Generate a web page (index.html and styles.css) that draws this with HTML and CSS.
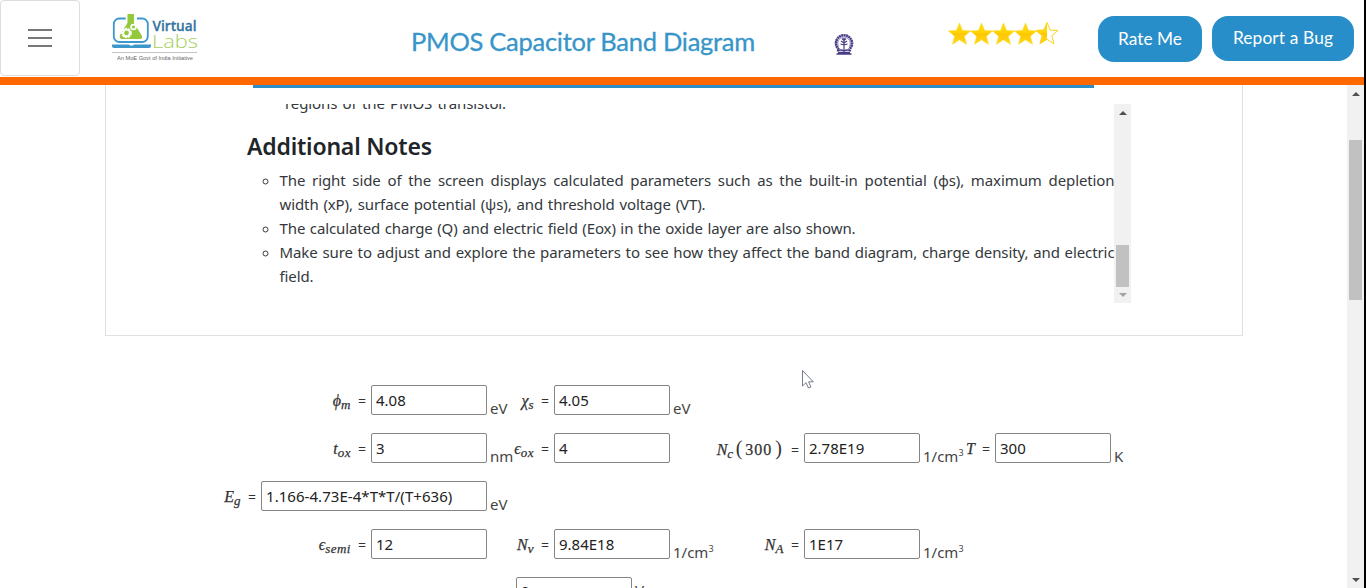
FILE: index.html
```html
<!DOCTYPE html>
<html lang="en">
<head>
<meta charset="utf-8">
<title>PMOS Capacitor Band Diagram</title>
<link rel="stylesheet" href="styles.css">
</head>
<body>
<header class="header">
  <button class="menu" aria-label="Menu"><span></span><span></span><span></span></button>
  <svg class="logo" width="90" height="52" viewBox="110 11 90 52">
    <rect x="113.800" y="18.500" width="34" height="23.500" rx="5.500" fill="none" stroke="#3c97cb" stroke-width="1.800"/>
    <path d="M125 13h12v8l6 14c1 3-1 5-4 5h-16c-3 0-5-2-4-5l7-14z" fill="#fff"/>
    <path d="M127.500 14h6.500v9l7.500 12c1.500 3 0 4-2 4h-17.500c-2 0-3-2-1.500-5l7-11z" fill="#94c83d"/>
    <circle cx="126.500" cy="33" r="4" fill="none" stroke="#fff" stroke-width="2.600" stroke-dasharray="2.200 .6"/>
    <circle cx="126.500" cy="33" r="3.200" fill="none" stroke="#fff" stroke-width="1.600"/>
    <circle cx="133.500" cy="27" r="2.400" fill="none" stroke="#fff" stroke-width="1.700"/>
    <path d="M112 44.500h17l1 1h3l1-1h17v1.500q0 2-2 2h-35q-2 0-2-2z" fill="#3c97cb"/>
    <text class="logo-virtual" x="152.500" y="31" textLength="44" lengthAdjust="spacingAndGlyphs">Virtual</text>
    <text class="logo-labs" x="152" y="48" textLength="46" lengthAdjust="spacingAndGlyphs">Labs</text>
    <path d="M112 52.500h85" stroke="#c4c4c4"/>
    <text class="logo-tag" x="117" y="59.500" textLength="76" lengthAdjust="spacingAndGlyphs">An MoE Govt of India Initiative</text>
  </svg>
  <h1 class="title">PMOS Capacitor Band Diagram</h1>
  <svg class="emblem" width="20" height="24" viewBox="0 0 20 24" fill="none" stroke="#493c87">
    <path d="M5 17.500A8 8 0 1 1 15 17.500" stroke-width="2.600" stroke-dasharray="2 .4"/>
    <path d="M5 15A6.200 6.200 0 1 1 15 15" stroke-width=".8" opacity=".6"/>
    <path d="M10 6v12M7 9l3 2 3-2M6.500 12l3.500 1 3.500-1M8 6.500l2 2 2-2" stroke-width="1.200"/>
    <path d="M3 19q4-2 7 0q3-2 7 0M2.500 22h15M4 20.500h12" stroke-width="1.400"/>
  </svg>
  <svg class="stars" width="112" height="24" viewBox="0 0 112 24">
    <defs>
      <linearGradient id="gold" x2="0" y2="1"><stop offset="0" stop-color="#ffda16"/><stop offset=".48" stop-color="#ffd400"/><stop offset=".5" stop-color="#ffc600"/><stop offset="1" stop-color="#ffd81a"/></linearGradient>
      <path id="star" d="M11 0l3 7.500 8 .5-6.200 5.200 2.200 8-7-4.400-7 4.400 2.200-8L0 8l8-.5z"/>
      <clipPath id="half"><path d="M0 0h11v24H0z"/></clipPath>
    </defs>
    <g fill="url(#gold)" stroke="#ffd81a" stroke-width=".6">
      <use href="#star" x=".5" y="1"/><use href="#star" x="22.500" y="1"/><use href="#star" x="44.500" y="1"/><use href="#star" x="66.500" y="1"/>
      <g transform="translate(88 .5)"><use href="#star" clip-path="url(#half)"/><use href="#star" fill="none" stroke="#ffd21c" stroke-width="1"/></g>
    </g>
  </svg>
  <button class="pill rate">Rate Me</button>
  <button class="pill report">Report a Bug</button>
</header>
<div class="body">
  <main class="content">
    <section class="panel">
      <div class="bar"></div>
      <div class="scrollbox">
        <div class="notes">
          <p class="cut"><span class="fit w222">regions of the PMOS transistor.</span></p>
          <h2>Additional Notes</h2>
          <ul>
            <li><span class="fit w835">The right side of the screen displays calculated parameters such as the built-in potential (ɸs), maximum depletion</span><span class="fit w426">width (xP), surface potential (ψs), and threshold voltage (VT).</span></li>
            <li><span class="fit w576">The calculated charge (Q) and electric field (Eox) in the oxide layer are also shown.</span></li>
            <li><span class="fit w835">Make sure to adjust and explore the parameters to see how they affect the band diagram, charge density, and electric</span><span class="fit">field.</span></li>
          </ul>
        </div>
        <div class="sb inner"><i class="up"></i><b></b><i class="down pale"></i></div>
      </div>
    </section>
    <form class="form">
      <div class="row">
        <label class="a"><span class="m"><i>ϕ<sub>m</sub></i><em>=</em></span><input value="4.08"></label><span class="u ua">eV</span>
        <label class="b"><span class="m"><i>χ<sub>s</sub></i><em>=</em></span><input value="4.05"></label><span class="u">eV</span>
      </div>
      <div class="row">
        <label class="a"><span class="m"><i>t<sub>ox</sub></i><em>=</em></span><input value="3"></label><span class="u ua">nm</span>
        <label class="b"><span class="m"><i>ϵ<sub>ox</sub></i><em>=</em></span><input value="4"></label><span class="u"></span>
        <label class="c"><span class="m"><i>N<sub>c</sub></i><span class="par">(</span><span class="num">300</span><span class="par">)</span><em>=</em></span><input value="2.78E19"></label><span class="u">1/cm<sup>3</sup></span>
        <label class="d"><span class="m"><i>T</i><em>=</em></span><input value="300"></label><span class="u">K</span>
      </div>
      <div class="row">
        <label class="a"><span class="m"><i>E<sub>g</sub></i><em>=</em></span><input class="wide" value="1.166-4.73E-4*T*T/(T+636)"></label><span class="u ua">eV</span>
      </div>
      <div class="row">
        <label class="a"><span class="m"><i>ϵ<sub>semi</sub></i><em>=</em></span><input value="12"></label><span class="u ua"></span>
        <label class="b"><span class="m"><i>N<sub>v</sub></i><em>=</em></span><input value="9.84E18"></label><span class="u">1/cm<sup>3</sup></span>
        <label class="c"><span class="m"><i>N<sub>A</sub></i><em>=</em></span><input value="1E17"></label><span class="u">1/cm<sup>3</sup></span>
      </div>
      <div class="row last"><input value="0"><span class="u level">V</span></div>
    </form>
  </main>
  <div class="sb page"><i class="up"></i><b></b><i class="down"></i></div>
  <div class="edge"></div>
</div>
<svg class="cursor" width="12" height="19" viewBox="0 0 12 19"><path d="M.5 .5v15.500l3.500-3.300 2.500 5.300 2.400-1-2.300-5.200h4.700z" fill="#fff" stroke="#555a70" stroke-width=".8"/></svg>
</body>
</html>
```

FILE: styles.css
```css
* { box-sizing: border-box; }
body { margin: 0; width: 1366px; height: 588px; overflow: hidden; background: #fff; color: #212529; font-family: "Noto Sans", sans-serif; font-size: 15px; display: flex; flex-direction: column; }
button, input { font-family: inherit; margin: 0; }

.header { height: 85px; flex: none; border-bottom: 8px solid #ff6800; display: flex; align-items: flex-start; margin-right: 2px; box-shadow: 2px 0 0 #000; }
.menu { width: 80px; height: 76px; background: #fff; border: 1px solid #dedede; border-radius: 4px; padding: 0; display: flex; flex-direction: column; align-items: center; justify-content: center; gap: 6px; }
.menu span { width: 24px; height: 2px; background: #777; }
.logo { margin: 11px 0 0 30px; }
.logo-virtual { font: 600 15px "Open Sans", sans-serif; fill: #31749f; stroke: #31749f; stroke-width: .3px; }
.logo-labs { font: 300 18px "Open Sans", sans-serif; fill: #a5cf5e; }
.logo-tag { font: 5.5px "Liberation Sans", sans-serif; fill: #666; }
.title { margin: 25px 0 0 211px; width: 344px; font: 400 25.5px/32px Lato, sans-serif; color: #3795c9; -webkit-text-stroke: .3px #3795c9; white-space: nowrap; letter-spacing: -.28px; }
.emblem { margin: 32px 0 0 79px; }
.stars { margin: 22px 0 0 94px; }
.pill { border: 0; border-radius: 16px; background: #288ec9; color: #fff; font: 17.3px Lato, sans-serif; padding: 0 0 2px; white-space: nowrap; }
.rate { width: 104px; height: 46px; margin: 16px 0 0 38px; }
.report { width: 142px; height: 45px; margin: 16px 0 0 10px; letter-spacing: .15px; }

.body { flex: 1; display: flex; min-height: 0; }
.content { flex: 1; overflow: hidden; }
.panel { margin-left: 105px; width: 1138px; height: 251px; border: 1px solid #e1e1e1; border-top: 0; }
.bar { margin-left: 147px; width: 841px; height: 3px; background: #2f8dc6; }
.scrollbox { margin: 16px 0 0 141px; width: 884px; height: 199px; display: flex; overflow: hidden; }
.notes { width: 868px; }
.cut { margin: -13px 0 0 38px; line-height: 24px; color: #34383c; }
h2 { margin: 17px 0 7px; font: 600 23px/29px "Noto Sans", sans-serif; letter-spacing: -.2px; white-space: nowrap; }
ul { margin: 0; padding-left: 32.5px; list-style: circle; line-height: 24px; color: #34383c; }
.fit { display: block; white-space: nowrap; text-align: justify; text-align-last: justify; letter-spacing: -.1px; }
.fit:not([class*="w"]) { text-align-last: left; }
.w222 { width: 221px; }
.w835 { width: 835px; }
.w426 { width: 426px; }
.w576 { width: 576px; }

.sb { width: 17px; flex: none; background: #f1f1f1; display: flex; flex-direction: column; align-items: center; }
.sb b { width: 13px; background: #c1c1c1; }
.up, .down { width: 0; height: 0; border: 4px solid transparent; }
.up { border-top: 0; border-bottom-color: #505050; }
.down { border-bottom: 0; border-top-color: #505050; margin-top: auto; margin-bottom: 6px; }
.pale { border-top-color: #a3a3a3; }
.inner { height: 199px; margin-left: -1px; }
.inner .up { margin-top: 7px; }
.inner b { margin-top: 130px; height: 42px; }
.page .up { margin-top: 7px; }
.page b { margin-top: 44px; height: 160px; }
.edge { width: 2px; background: #000; }

.form { margin: 49px 0 0 210px; display: flex; flex-direction: column; gap: 18px; }
.row { display: flex; height: 30px; }
label { display: flex; justify-content: flex-end; align-items: center; }
.a { width: 277px; }
.b { width: 155px; }
.c { width: 205px; }
.d { width: 146px; }
.form input { width: 116px; height: 30px; flex: none; border: 1px solid #858585; border-radius: 2px; padding: 0 4px; font-size: 15px; color: #222; background: #fff; }
.form input.wide { width: 226px; letter-spacing: .05px; }
.m { display: flex; align-items: baseline; height: 30px; line-height: 31px; font-family: "Liberation Serif", "DejaVu Serif", serif; font-size: 16px; white-space: nowrap; color: #333; -webkit-text-stroke: .25px #333; }
.m sub { font-size: 13px; line-height: 0; vertical-align: -3px; letter-spacing: .5px; }
.m em { font: 14px "Noto Sans", sans-serif; margin: 0 5px 0 7px; -webkit-text-stroke: 0; }
.par { font-size: 20px; padding: 0 2px; -webkit-text-stroke: 0; }
.num { font-size: 16px; letter-spacing: 1px; padding: 0 1px; }
.u { width: 45px; padding-left: 3px; line-height: 24px; padding-top: 11px; white-space: nowrap; color: #444; }
.ua { width: 28px; }
.u sup { font-size: 9px; line-height: 0; vertical-align: 6px; }
.last { margin-left: 306px; }
.last input { padding-bottom: 3px; }
.level { padding-top: 1px; }
.cursor { position: absolute; left: 802px; top: 370px; }
```
